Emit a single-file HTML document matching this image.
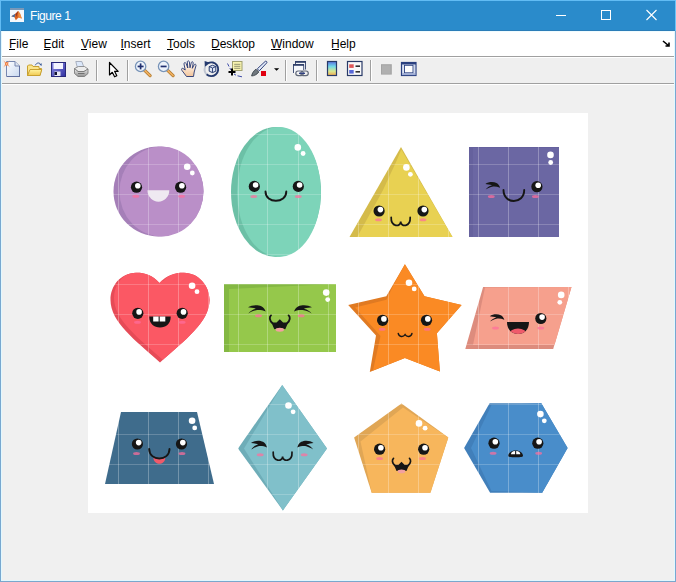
<!DOCTYPE html>
<html><head><meta charset="utf-8">
<style>
html,body{margin:0;padding:0;}
body{width:676px;height:582px;position:relative;overflow:hidden;background:#f0f0f0;font-family:"Liberation Sans",sans-serif;}
.abs{position:absolute;}
#title{left:0;top:0;width:676px;height:31px;background:#2a8bcb;}
#ttext{left:30px;top:9px;color:#fff;font-size:12px;letter-spacing:-0.45px;white-space:nowrap;}
#menu{left:1px;top:31px;width:674px;height:25px;background:#fff;}
.mi{position:absolute;top:37px;font-size:12px;color:#000;white-space:nowrap;}
.ul{position:absolute;top:49px;height:1px;width:6px;background:#000;}
#l1{left:1px;top:56px;width:674px;height:1px;background:#a0a0a0;}
#l1b{left:1px;top:57px;width:674px;height:1px;background:#fff;}
#tb{left:1px;top:58px;width:674px;height:25px;background:#efefef;}
#l2{left:1px;top:83px;width:674px;height:1px;background:#a0a0a0;}
#l2b{left:1px;top:84px;width:674px;height:1px;background:#fff;}
#bl{left:0;top:31px;width:1px;height:551px;background:#78a8d0;}#bl2{left:1px;top:31px;width:1px;height:550px;background:#e2f8ff;}#tbl{left:0;top:0;width:1px;height:31px;background:#62bcf4;}#tbt{left:0;top:0;width:676px;height:1px;background:#62bcf4;}#tbr{left:675px;top:0;width:1px;height:31px;background:#6cc4f8;}
#br{left:675px;top:31px;width:1px;height:551px;background:#78a8d0;}#br2{left:674px;top:31px;width:1px;height:550px;background:#e2f8ff;}
#bb{left:0;top:581px;width:676px;height:1px;background:#7aa8cc;}#bb2{left:1px;top:580px;width:674px;height:1px;background:#e2f8ff;}
#img{left:88px;top:113px;width:500px;height:400px;background:#fff;}
svg{position:absolute;left:0;top:0;}
</style></head><body>
<div id="title" class="abs"></div><div class="abs" style="left:1px;top:30px;width:674px;height:1px;background:#2b7db8"></div>
<div id="ttext" class="abs">Figure 1</div>
<div id="menu" class="abs"></div><div class="abs" style="left:1px;top:31px;width:674px;height:1px;background:#f0fcff"></div>
<div class="mi" style="left:9px">File</div><div class="ul" style="left:9px"></div>
<div class="mi" style="left:43.5px">Edit</div><div class="ul" style="left:44px"></div>
<div class="mi" style="left:81px">View</div><div class="ul" style="left:81px"></div>
<div class="mi" style="left:120.5px">Insert</div><div class="ul" style="left:121px;width:3px"></div>
<div class="mi" style="left:167px">Tools</div><div class="ul" style="left:167px"></div>
<div class="mi" style="left:211px">Desktop</div><div class="ul" style="left:212px;width:8px"></div>
<div class="mi" style="left:271px">Window</div><div class="ul" style="left:271px;width:10px"></div>
<div class="mi" style="left:331px">Help</div><div class="ul" style="left:332px;width:7px"></div>
<div id="l1" class="abs"></div><div id="l1b" class="abs"></div>
<div id="tb" class="abs"></div>
<div id="l2" class="abs"></div><div id="l2b" class="abs"></div>
<div id="bl" class="abs"></div><div id="br" class="abs"></div><div id="bb" class="abs"></div><div id="bl2" class="abs"></div><div id="br2" class="abs"></div><div id="bb2" class="abs"></div><div id="tbl" class="abs"></div><div id="tbt" class="abs"></div><div id="tbr" class="abs"></div>
<div id="img" class="abs"></div>
<svg width="676" height="582" viewBox="0 0 676 582">
<circle cx="158.5" cy="191.5" r="45" fill="#a57fb8"/>
<ellipse cx="161.5" cy="191.5" rx="42" ry="45" fill="#ba8fc8"/>
<ellipse cx="276" cy="192" rx="45" ry="65" fill="#6cc0a6"/>
<ellipse cx="279" cy="192" rx="42" ry="65" fill="#7dd4b9"/>
<polygon points="401,147 349.5,237 452.5,237" fill="#d4bb4a"/>
<polygon points="401.3,149.5 452.5,237 357.2,237 382.8,190.5 396.5,161" fill="#e8d152"/>
<rect x="469" y="147" width="90" height="90" fill="#65619d"/>
<rect x="473" y="147.8" width="86" height="89.2" fill="#6b67a3"/>
<clipPath id="hc"><path d="M159.5,283 C152,275 145,272.7 136,272.8 C120,273.5 110.5,286 110.5,300 C110.5,322 135,340 160,362.5 C185,340 209.5,322 209.5,300 C209.5,286 199,273 184,272.8 C175,272.7 167,275 159.5,283 Z"/></clipPath><path d="M159.5,283 C152,275 145,272.7 136,272.8 C120,273.5 110.5,286 110.5,300 C110.5,322 135,340 160,362.5 C185,340 209.5,322 209.5,300 C209.5,286 199,273 184,272.8 C175,272.7 167,275 159.5,283 Z" fill="#e64b57"/><g clip-path="url(#hc)"><path d="M159.5,283 C152,275 145,272.7 136,272.8 C120,273.5 110.5,286 110.5,300 C110.5,322 135,340 160,362.5 C185,340 209.5,322 209.5,300 C209.5,286 199,273 184,272.8 C175,272.7 167,275 159.5,283 Z" fill="#fb5864" transform="translate(3.5,-2)"/></g>
<rect x="224" y="284" width="112" height="68" fill="#84b843"/>
<polygon points="229,289 336,284 336,352 229,352" fill="#95c84b"/>
<polygon points="404.9,264.2 424.5,296.2 461.6,305 436.9,333.3 439.9,371.4 404.9,358 369.8,372 376,335.4 348.2,305 386.3,296.2" fill="#e07a22"/>
<polygon points="404.9,264.2 424.5,296.2 461.6,305 436.9,333.3 439.9,371.4 404.9,358 373,370.5 380.5,336 355,307.5 386.5,299.8 393.5,285" fill="#fa8a24"/>
<polygon points="483.1,287 571.5,287 553.2,349 465.3,349" fill="#dd8c7d"/>
<polygon points="485,287.5 571.5,287 554.5,345 473,345" fill="#f6a08d"/>
<polygon points="121,412 197,412 214,484 105,484" fill="#3f6c8c"/>
<polygon points="282.2,385 327,448.4 282.9,510.4 238,448.4" fill="#6eadb8"/>
<polygon points="282.2,385 327,448.4 282.9,510.4 244,448.6" fill="#80c0ca"/>
<polygon points="401.5,403.6 448.3,437.4 430.4,492.7 371.7,492.7 354.1,437.4" fill="#e0a655"/>
<polygon points="403,407.5 448.3,437.4 430.4,492.7 371.7,492.7 360.5,441.5" fill="#f7b65c"/>
<polygon points="489.6,403.3 541.3,403.3 567.6,448 542.2,492.7 490.1,492.7 464.1,448" fill="#417fba"/>
<polygon points="491.5,405 541.3,403.3 567.6,448 542.2,492.7 491.5,491 471,448" fill="#498dca"/>
<clipPath id="ic"><rect x="88" y="113" width="500" height="400"/></clipPath>
<g clip-path="url(#ic)"><g stroke="#fff" stroke-width="1"><line x1="118.5" y1="113" x2="118.5" y2="513" opacity="0.27"/><line x1="148.5" y1="113" x2="148.5" y2="513" opacity="0.27"/><line x1="178.5" y1="113" x2="178.5" y2="513" opacity="0.27"/><line x1="208.5" y1="113" x2="208.5" y2="513" opacity="0.27"/><line x1="238.5" y1="113" x2="238.5" y2="513" opacity="0.27"/><line x1="267.5" y1="113" x2="267.5" y2="513" opacity="0.27"/><line x1="298.5" y1="113" x2="298.5" y2="513" opacity="0.27"/><line x1="328.5" y1="113" x2="328.5" y2="513" opacity="0.27"/><line x1="358.5" y1="113" x2="358.5" y2="513" opacity="0.27"/><line x1="388.5" y1="113" x2="388.5" y2="513" opacity="0.27"/><line x1="418.5" y1="113" x2="418.5" y2="513" opacity="0.27"/><line x1="448.5" y1="113" x2="448.5" y2="513" opacity="0.27"/><line x1="478.5" y1="113" x2="478.5" y2="513" opacity="0.27"/><line x1="508.5" y1="113" x2="508.5" y2="513" opacity="0.27"/><line x1="538.5" y1="113" x2="538.5" y2="513" opacity="0.27"/><line x1="568.5" y1="113" x2="568.5" y2="513" opacity="0.27"/><line x1="88" y1="134.5" x2="588" y2="134.5" opacity="0.2"/><line x1="88" y1="164.5" x2="588" y2="164.5" opacity="0.2"/><line x1="88" y1="194.5" x2="588" y2="194.5" opacity="0.2"/><line x1="88" y1="224.5" x2="588" y2="224.5" opacity="0.2"/><line x1="88" y1="254.5" x2="588" y2="254.5" opacity="0.2"/><line x1="88" y1="284.5" x2="588" y2="284.5" opacity="0.2"/><line x1="88" y1="314.5" x2="588" y2="314.5" opacity="0.2"/><line x1="88" y1="344.5" x2="588" y2="344.5" opacity="0.2"/><line x1="88" y1="374.5" x2="588" y2="374.5" opacity="0.2"/><line x1="88" y1="404.5" x2="588" y2="404.5" opacity="0.2"/><line x1="88" y1="434.5" x2="588" y2="434.5" opacity="0.2"/><line x1="88" y1="464.5" x2="588" y2="464.5" opacity="0.2"/><line x1="88" y1="494.5" x2="588" y2="494.5" opacity="0.2"/></g></g>
<circle cx="136.5" cy="187.2" r="5.6" fill="#161616"/><circle cx="137.8" cy="185.79999999999998" r="2.8" fill="#fff"/><circle cx="180.6" cy="187.2" r="5.6" fill="#161616"/><circle cx="181.9" cy="185.79999999999998" r="2.8" fill="#fff"/><ellipse cx="135.8" cy="196.2" rx="3.4" ry="1.5" fill="#ff6e9c" opacity="0.72"/><ellipse cx="181.6" cy="196.2" rx="3.4" ry="1.5" fill="#ff6e9c" opacity="0.72"/><circle cx="187.2" cy="166.7" r="3.3" fill="#fff"/><circle cx="192.3" cy="173" r="2.4" fill="#fff"/>
<path d="M147.5,190.2 L169.3,190.2 A10.9,11.5 0 0 1 147.5,190.2 Z" fill="#efe9f1"/>
<circle cx="254.3" cy="186.4" r="5.6" fill="#161616"/><circle cx="255.60000000000002" cy="185.0" r="2.8" fill="#fff"/><circle cx="298.3" cy="186.4" r="5.6" fill="#161616"/><circle cx="299.6" cy="185.0" r="2.8" fill="#fff"/><ellipse cx="253.8" cy="196.4" rx="3.4" ry="1.5" fill="#ff6e9c" opacity="0.72"/><ellipse cx="298.3" cy="196.4" rx="3.4" ry="1.5" fill="#ff6e9c" opacity="0.72"/><circle cx="297.8" cy="147.4" r="3.3" fill="#fff"/><circle cx="303.1" cy="153.5" r="2.4" fill="#fff"/>
<path d="M265.5,191.5 C265.5,203.86900000000003 286.3,203.86900000000003 286.3,191.5" fill="none" stroke="#161616" stroke-width="1.9" stroke-linecap="round"/>
<circle cx="379.1" cy="211" r="5.6" fill="#161616"/><circle cx="380.40000000000003" cy="209.6" r="2.8" fill="#fff"/><circle cx="423" cy="211" r="5.6" fill="#161616"/><circle cx="424.3" cy="209.6" r="2.8" fill="#fff"/><ellipse cx="378.5" cy="219.7" rx="3.4" ry="1.5" fill="#ff6e9c" opacity="0.72"/><ellipse cx="423" cy="219.7" rx="3.4" ry="1.5" fill="#ff6e9c" opacity="0.72"/><circle cx="406.4" cy="167.4" r="3.3" fill="#fff"/><circle cx="410.4" cy="174.3" r="2.4" fill="#fff"/>
<path d="M391.2,217.3 C390.7,227.31 400.7,227.31 400.7,221.535 C400.7,227.31 410.7,227.31 410.2,217.3" fill="none" stroke="#161616" stroke-width="1.7" stroke-linecap="round"/>
<path d="M485.40,183.95 C488.34,181.73 493.49,181.51 496.43,182.99 C498.34,183.95 499.51,185.80 500.10,187.65 C497.16,186.54 494.22,186.17 492.01,186.69 C489.81,187.28 487.16,188.39 485.69,189.50 C486.87,187.65 489.07,185.95 492.01,185.21 C489.81,184.32 487.16,184.32 485.40,183.95Z" fill="#161616"/><circle cx="536.9" cy="186.7" r="5.6" fill="#161616"/><circle cx="538.1999999999999" cy="185.29999999999998" r="2.8" fill="#fff"/><ellipse cx="491.3" cy="196.5" rx="3.4" ry="1.5" fill="#ff6e9c" opacity="0.72"/><ellipse cx="535.4" cy="196.5" rx="3.4" ry="1.5" fill="#ff6e9c" opacity="0.72"/><circle cx="550.5" cy="154.9" r="3.3" fill="#fff"/><circle cx="550.7" cy="162.5" r="2.4" fill="#fff"/>
<path d="M503.5,190 C503.5,204.63 524.2,204.63 524.2,190" fill="none" stroke="#161616" stroke-width="1.9" stroke-linecap="round"/>
<circle cx="137.8" cy="313.3" r="5.6" fill="#161616"/><circle cx="139.10000000000002" cy="311.90000000000003" r="2.8" fill="#fff"/><circle cx="182.2" cy="313.3" r="5.6" fill="#161616"/><circle cx="183.5" cy="311.90000000000003" r="2.8" fill="#fff"/><ellipse cx="137.5" cy="322.3" rx="3.4" ry="1.5" fill="#ff6e9c" opacity="0.72"/><ellipse cx="182.2" cy="322.3" rx="3.4" ry="1.5" fill="#ff6e9c" opacity="0.72"/><circle cx="192.1" cy="285.7" r="3.3" fill="#fff"/><circle cx="197" cy="291.7" r="2.4" fill="#fff"/>
<path d="M149.3,316.5 L170.7,316.5 C170.7,324 166,327.5 160,327.5 C154,327.5 149.3,324 149.3,316.5 Z" fill="#161616"/>
<rect x="153.2" y="316.5" width="5.4" height="5" fill="#fff"/><rect x="159.7" y="316.5" width="5.6" height="5" fill="#fff"/>
<path d="M248.00,307.27 C251.54,304.78 257.74,304.54 261.27,306.20 C263.58,307.27 264.99,309.35 265.70,311.43 C262.16,310.18 258.62,309.76 255.97,310.35 C253.31,311.01 250.12,312.25 248.35,313.50 C249.77,311.43 252.43,309.52 255.97,308.69 C253.31,307.69 250.12,307.69 248.00,307.27Z" fill="#161616"/><path d="M312.00,307.27 C308.40,304.78 302.10,304.54 298.50,306.20 C296.16,307.27 294.72,309.35 294.00,311.43 C297.60,310.18 301.20,309.76 303.90,310.35 C306.60,311.01 309.84,312.25 311.64,313.50 C310.20,311.43 307.50,309.52 303.90,308.69 C306.60,307.69 309.84,307.69 312.00,307.27Z" fill="#161616"/><ellipse cx="258.5" cy="315.8" rx="3.4" ry="1.5" fill="#ff6e9c" opacity="0.72"/><ellipse cx="301.2" cy="315.8" rx="3.4" ry="1.5" fill="#ff6e9c" opacity="0.72"/><circle cx="326.2" cy="292.6" r="3.3" fill="#fff"/><circle cx="327.7" cy="299.6" r="2.4" fill="#fff"/>
<path d="M271.00,315.42 C269.24,316.96 269.24,320.48 272.54,323.23 M288.60,315.42 C290.36,316.96 290.36,320.48 287.06,323.23" fill="none" stroke="#161616" stroke-width="1.87" stroke-linecap="round"/><path d="M271.44,322.46 L276.50,322.46 L279.80,319.16 L283.10,322.46 L288.16,322.46 L285.30,329.28 L282.00,328.40 L277.60,328.40 L274.30,329.28 Z" fill="#161616"/><ellipse cx="279.8" cy="329.72" rx="4.18" ry="1.98" fill="#f2a0a0"/>
<circle cx="382.6" cy="320.3" r="5.6" fill="#161616"/><circle cx="383.90000000000003" cy="318.90000000000003" r="2.8" fill="#fff"/><circle cx="426.5" cy="320.3" r="5.6" fill="#161616"/><circle cx="427.8" cy="318.90000000000003" r="2.8" fill="#fff"/><ellipse cx="382.2" cy="329.2" rx="3.4" ry="1.5" fill="#ff6e9c" opacity="0.72"/><ellipse cx="427.2" cy="329.2" rx="3.4" ry="1.5" fill="#ff6e9c" opacity="0.72"/><circle cx="409" cy="282.8" r="3.3" fill="#fff"/><circle cx="414.2" cy="288.9" r="2.4" fill="#fff"/>
<path d="M398.3,333.6 C399,337 403.2,337.3 405.1,334.6 C407,337.3 411.2,337 411.9,333.6" fill="none" stroke="#161616" stroke-width="1.5" stroke-linecap="round"/>
<path d="M489.80,316.17 C492.72,314.04 497.83,313.83 500.75,315.25 C502.65,316.17 503.82,317.95 504.40,319.73 C501.48,318.66 498.56,318.31 496.37,318.80 C494.18,319.37 491.55,320.44 490.09,321.50 C491.26,319.73 493.45,318.09 496.37,317.38 C494.18,316.53 491.55,316.53 489.80,316.17Z" fill="#161616"/><circle cx="540.8" cy="318.5" r="5.6" fill="#161616"/><circle cx="542.0999999999999" cy="317.1" r="2.8" fill="#fff"/><ellipse cx="495.5" cy="328" rx="3.4" ry="1.5" fill="#ff6e9c" opacity="0.72"/><ellipse cx="540.8" cy="328" rx="3.4" ry="1.5" fill="#ff6e9c" opacity="0.72"/><circle cx="561.2" cy="294.9" r="3.3" fill="#fff"/><circle cx="559.8" cy="302.3" r="2.4" fill="#fff"/>
<clipPath id="pm"><path d="M507,322 L529,322 C529,330 524,334 518,334 C512,334 507,330 507,322 Z"/></clipPath><path d="M507,322 L529,322 C529,330 524,334 518,334 C512,334 507,330 507,322 Z" fill="#161616"/><g clip-path="url(#pm)"><ellipse cx="518" cy="334.5" rx="9" ry="6" fill="#ef5b6b"/></g>
<circle cx="137.4" cy="444" r="5.6" fill="#161616"/><circle cx="138.70000000000002" cy="442.6" r="2.8" fill="#fff"/><circle cx="181.5" cy="444" r="5.6" fill="#161616"/><circle cx="182.8" cy="442.6" r="2.8" fill="#fff"/><ellipse cx="136.5" cy="453.6" rx="3.4" ry="1.5" fill="#ff6e9c" opacity="0.72"/><ellipse cx="182" cy="453.6" rx="3.4" ry="1.5" fill="#ff6e9c" opacity="0.72"/><circle cx="192.1" cy="420.7" r="3.3" fill="#fff"/><circle cx="194.7" cy="427.9" r="2.4" fill="#fff"/>
<path d="M153.4,457.8 C154,465.8 164.8,465.8 165.3,457.8 Z" fill="#ef5a6a"/>
<path d="M149.2,449 C149.2,461.635 169.5,461.635 169.5,449" fill="none" stroke="#161616" stroke-width="1.9" stroke-linecap="round"/>
<path d="M251.00,443.00 C254.20,440.36 259.80,440.10 263.00,441.86 C265.08,443.00 266.36,445.20 267.00,447.40 C263.80,446.08 260.60,445.64 258.20,446.26 C255.80,446.96 252.92,448.28 251.32,449.60 C252.60,447.40 255.00,445.38 258.20,444.50 C255.80,443.44 252.92,443.44 251.00,443.00Z" fill="#161616"/><path d="M313.50,443.00 C310.26,440.36 304.59,440.10 301.35,441.86 C299.24,443.00 297.95,445.20 297.30,447.40 C300.54,446.08 303.78,445.64 306.21,446.26 C308.64,446.96 311.56,448.28 313.18,449.60 C311.88,447.40 309.45,445.38 306.21,444.50 C308.64,443.44 311.56,443.44 313.50,443.00Z" fill="#161616"/><ellipse cx="260.2" cy="454.7" rx="3.4" ry="1.5" fill="#ff6e9c" opacity="0.72"/><ellipse cx="304.2" cy="454.7" rx="3.4" ry="1.5" fill="#ff6e9c" opacity="0.72"/><circle cx="288.5" cy="405.5" r="3.3" fill="#fff"/><circle cx="293.1" cy="411.8" r="2.4" fill="#fff"/>
<path d="M273.2,452.2 C272.7,462.08000000000004 282.6,462.08000000000004 282.6,456.38 C282.6,462.08000000000004 292.5,462.08000000000004 292,452.2" fill="none" stroke="#161616" stroke-width="1.7" stroke-linecap="round"/>
<circle cx="379.6" cy="449.2" r="5.6" fill="#161616"/><circle cx="380.90000000000003" cy="447.8" r="2.8" fill="#fff"/><circle cx="423.7" cy="449.2" r="5.6" fill="#161616"/><circle cx="425.0" cy="447.8" r="2.8" fill="#fff"/><ellipse cx="379.6" cy="458.5" rx="3.4" ry="1.5" fill="#ff6e9c" opacity="0.72"/><ellipse cx="422.5" cy="458.5" rx="3.4" ry="1.5" fill="#ff6e9c" opacity="0.72"/><circle cx="419" cy="423.4" r="3.3" fill="#fff"/><circle cx="425.1" cy="428.2" r="2.4" fill="#fff"/>
<path d="M393.50,458.40 C391.90,459.80 391.90,463.00 394.90,465.50 M409.50,458.40 C411.10,459.80 411.10,463.00 408.10,465.50" fill="none" stroke="#161616" stroke-width="1.70" stroke-linecap="round"/><path d="M393.90,464.80 L398.50,464.80 L401.50,461.80 L404.50,464.80 L409.10,464.80 L406.50,471.00 L403.50,470.20 L399.50,470.20 L396.50,471.00 Z" fill="#161616"/><ellipse cx="401.5" cy="471.40" rx="3.80" ry="1.80" fill="#f2a0a0"/>
<circle cx="494" cy="443.2" r="5.6" fill="#161616"/><circle cx="495.3" cy="441.8" r="2.8" fill="#fff"/><circle cx="537.8" cy="443.2" r="5.6" fill="#161616"/><circle cx="539.0999999999999" cy="441.8" r="2.8" fill="#fff"/><ellipse cx="493.1" cy="453.2" rx="3.4" ry="1.5" fill="#ff6e9c" opacity="0.72"/><ellipse cx="538.7" cy="453.2" rx="3.4" ry="1.5" fill="#ff6e9c" opacity="0.72"/><circle cx="540.4" cy="414.1" r="3.3" fill="#fff"/><circle cx="544.3" cy="420.8" r="2.4" fill="#fff"/>
<path d="M508.3,456 C508.3,453 511,450.4 515.6,450.4 C520.3,450.4 523,453 523,456 C523,457 521,457.2 515.6,457.2 C510.3,457.2 508.3,457 508.3,456 Z" fill="#161616"/>
<path d="M511,454.2 C511,452.3 512.5,450.9 515.1,450.9 V454.2 Z M516.2,450.9 C518.8,450.9 520.3,452.3 520.3,454.2 H516.2 Z" fill="#fff"/>
<rect x="96" y="60" width="1" height="21" fill="#a0a0a0"/><rect x="97" y="60" width="1" height="21" fill="#fff"/>
<rect x="127" y="60" width="1" height="21" fill="#a0a0a0"/><rect x="128" y="60" width="1" height="21" fill="#fff"/>
<rect x="285" y="60" width="1" height="21" fill="#a0a0a0"/><rect x="286" y="60" width="1" height="21" fill="#fff"/>
<rect x="316" y="60" width="1" height="21" fill="#a0a0a0"/><rect x="317" y="60" width="1" height="21" fill="#fff"/>
<rect x="370" y="60" width="1" height="21" fill="#a0a0a0"/><rect x="371" y="60" width="1" height="21" fill="#fff"/>
<defs><linearGradient id="gpage" x1="0" y1="0" x2="1" y2="1"><stop offset="0" stop-color="#ffffff"/><stop offset="1" stop-color="#c8d8f0"/></linearGradient><linearGradient id="gfold" x1="0" y1="0" x2="0" y2="1"><stop offset="0" stop-color="#fff4a0"/><stop offset="1" stop-color="#f0c850"/></linearGradient><linearGradient id="gcb" x1="0" y1="0" x2="0" y2="1"><stop offset="0" stop-color="#5a70e0"/><stop offset="0.35" stop-color="#70d8e8"/><stop offset="0.7" stop-color="#d8e890"/><stop offset="1" stop-color="#f0a850"/></linearGradient><linearGradient id="gflop" x1="0" y1="0" x2="1" y2="1"><stop offset="0" stop-color="#9090e8"/><stop offset="1" stop-color="#3030a0"/></linearGradient><linearGradient id="gprn" x1="0" y1="0" x2="0" y2="1"><stop offset="0" stop-color="#f0f0f0"/><stop offset="1" stop-color="#909090"/></linearGradient></defs>
<path d="M6.5,61.5 H15 L19.5,66 V76.5 H6.5 Z" fill="url(#gpage)" stroke="#7888b0" stroke-width="1"/><path d="M15,61.5 V66 H19.5" fill="#dde4f0" stroke="#7888b0" stroke-width="1"/><rect x="7" y="76" width="13" height="1" fill="#6070a0"/><rect x="19" y="66" width="1" height="11" fill="#6070a0"/><path d="M3.8,61.2 L9.4,66.6 M9.4,61.2 L3.8,66.6" stroke="#f09060" stroke-width="0.8"/><circle cx="6.6" cy="63.9" r="1.8" fill="#f07838"/><circle cx="6.6" cy="63.9" r="0.9" fill="#ffc090"/>
<path d="M27.5,66 V75.5 H40 L41.5,68.5 H39 V66.5 H33 L32,65 H28.5 Z" fill="#fbe48a" stroke="#c8a030" stroke-width="1"/><path d="M27.5,75.5 L30,69.5 H41.8 L40,75.5 Z" fill="url(#gfold)" stroke="#c8a030" stroke-width="1"/><path d="M35.3,65.3 C36.5,62.6 39.2,62.3 40.6,64.3" fill="none" stroke="#3a5a98" stroke-width="1"/><path d="M39.3,64.5 L41.7,63.2 L41.6,66.1 Z" fill="#3a5a98"/>
<rect x="51.5" y="62.5" width="14" height="14" fill="url(#gflop)" stroke="#28287a" stroke-width="1"/><rect x="53.5" y="63" width="9.5" height="6" fill="#f4f4ff"/><rect x="54.5" y="71.5" width="6" height="4.5" fill="#e8e8f4"/><rect x="54.5" y="72" width="2.5" height="3" fill="#101030"/>
<path d="M75.8,61.5 H81.8 L83.8,67 H77.2 Z" fill="#dce8fa" stroke="#98a0b0" stroke-width="0.8"/><path d="M74.5,68.5 L78.5,66.5 H84.5 L88,69 L84,71.5 H78 Z" fill="#ececec" stroke="#808080" stroke-width="0.8"/><path d="M74.5,68.5 L78,71.5 H84 L88,69 V73.5 L84.5,76.5 H78 L74.5,73.5 Z" fill="url(#gprn)" stroke="#707070" stroke-width="0.8"/><path d="M78,73.5 H84.5" stroke="#606060" stroke-width="0.8"/>
<path d="M109.5,62.5 V75 L112.3,72.3 L114.6,76.8 L116.8,75.8 L114.6,71.3 H118.2 Z" fill="#fff" stroke="#000" stroke-width="1.2" stroke-linejoin="round"/>
<path d="M144.4,70.2 L150.1,75.6" stroke="#b07a30" stroke-width="3.2" stroke-linecap="round"/><path d="M144.4,70.2 L150.1,75.6" stroke="#f0b060" stroke-width="1.6" stroke-linecap="round"/><circle cx="140.6" cy="66.4" r="5.2" fill="#eef4fc" stroke="#7894b8" stroke-width="1.3"/>
<rect x="137.6" y="65.6" width="6" height="1.7" fill="#203070"/>
<rect x="139.75" y="63.4" width="1.7" height="6" fill="#203070"/>
<path d="M167.4,70.2 L173.1,75.6" stroke="#b07a30" stroke-width="3.2" stroke-linecap="round"/><path d="M167.4,70.2 L173.1,75.6" stroke="#f0b060" stroke-width="1.6" stroke-linecap="round"/><circle cx="163.6" cy="66.4" r="5.2" fill="#eef4fc" stroke="#7894b8" stroke-width="1.3"/>
<rect x="160.6" y="65.6" width="6" height="1.7" fill="#203070"/>
<defs><linearGradient id="ghand" x1="0" y1="0" x2="0" y2="1"><stop offset="0" stop-color="#ffffff"/><stop offset="0.45" stop-color="#fbe6d2"/><stop offset="1" stop-color="#f2c49a"/></linearGradient><linearGradient id="grot" x1="0" y1="0" x2="1" y2="1"><stop offset="0" stop-color="#ffffff"/><stop offset="0.5" stop-color="#253a6e"/></linearGradient></defs>
<path d="M186.5,76.5 L182,70.5 C181,69.3 181.8,67.8 183,68.5 L185.2,70 L184,64 C183.7,62.6 185.5,62 186,63.3 L187.8,68 L187.3,62 C187.2,60.6 189.2,60.5 189.4,62 L190,67.8 L191.3,62.6 C191.6,61.3 193.4,61.6 193.2,63 L192.3,68.3 L194.2,64.8 C194.8,63.7 196.4,64.3 196,65.5 L194.2,72 L193.5,76.5 Z" fill="url(#ghand)" stroke="#253570" stroke-width="0.9" stroke-linejoin="round"/>
<path d="M208,63.2 A6.9,6.9 0 1 1 206.5,74.2" fill="none" stroke="#253a6e" stroke-width="1.9"/><path d="M206.5,74.2 A6.9,6.9 0 0 1 205.2,66.8" fill="none" stroke="#c0c6d2" stroke-width="1.9"/><path d="M204.6,61 L210,62.8 L204.8,67 Z" fill="#253a6e"/><path d="M209.2,66.6 L212.5,65.3 L215.8,66.6 V71.2 L212.5,72.6 L209.2,71.2 Z" fill="#dfe6f6" stroke="#253a6e" stroke-width="1"/><path d="M209.2,66.6 L212.5,68 L215.8,66.6 M212.5,68 V72.6" fill="none" stroke="#253a6e" stroke-width="0.9"/>
<rect x="232.5" y="61.5" width="9.5" height="9" fill="#f8f4b0" stroke="#a0a070" stroke-width="1"/><path d="M234.2,64.3 H240.3 M234.2,66.3 H240.3 M234.2,68.3 H240.3" stroke="#8a8a6a" stroke-width="0.9"/><path d="M227.5,63.5 L229,66.5 M229.8,68 L231,70 M234,74 L236,75.2 M237.5,75.8 L242,76.8" stroke="#2a3aa0" stroke-width="0.9" fill="none"/><path d="M228.5,72 H235.5 M232,68.5 V75.5" stroke="#000" stroke-width="2"/>
<path d="M257.3,68.8 L265.3,61.3 C266.3,60.8 267.3,61.8 266.8,62.8 L259.3,70.8 Z" fill="#e4ecfa" stroke="#30407a" stroke-width="1"/><path d="M256,69.2 L258.8,72 C257,74.6 254.2,75.8 251.6,76 C252,73.4 253.6,70.8 256,69.2 Z" fill="#70787e" stroke="#303840" stroke-width="0.8"/><rect x="261" y="71" width="5" height="5" fill="#e00010"/><path d="M274,68.2 H279.2 L276.6,70.8 Z" fill="#000"/>
<path d="M295.5,69.5 V61.5 H305.5 V69.5" fill="#f4f6fa" stroke="#30406a" stroke-width="0.9"/><rect x="295" y="61" width="11" height="1.8" fill="#30406a"/><rect x="293.5" y="64.5" width="10.2" height="8.5" fill="#f6f8fc"/><path d="M293.5,73 V64.5 H303.7 V70" fill="none" stroke="#30406a" stroke-width="0.9"/><rect x="293" y="64" width="11" height="1.8" fill="#30406a"/>
<rect x="327.5" y="61.5" width="9" height="14" fill="url(#gcb)" stroke="#283a68" stroke-width="1.2"/>
<rect x="347.5" y="61.5" width="14.5" height="14" fill="#fafafa" stroke="#283a68" stroke-width="1.2"/><rect x="349.2" y="64.3" width="4.5" height="3.6" fill="#e05858"/><rect x="349.2" y="70" width="4.5" height="3.6" fill="#5868d8"/><rect x="355.5" y="65.5" width="4.5" height="1.3" fill="#000"/><rect x="355.5" y="71.2" width="4.5" height="1.3" fill="#000"/>
<rect x="381" y="64.2" width="10.8" height="10.4" fill="#a4a4a4"/><rect x="382" y="65.3" width="8.5" height="8.5" fill="#b0b0b0"/>
<rect x="401.5" y="62.5" width="14.5" height="13" fill="#e8eefa" stroke="#2a4080" stroke-width="1.2"/><rect x="401.5" y="62.5" width="14.5" height="2" fill="#2a4080"/><rect x="404.5" y="65.3" width="8.5" height="7.5" fill="#fff" stroke="#2a4080" stroke-width="0.9"/><path d="M402.8,65.5 V72.5 M414.7,65.5 V72.5" stroke="#a8b4d8" stroke-width="1" stroke-dasharray="1,1"/><rect x="402" y="73.3" width="13.5" height="1.8" fill="#8898c8"/><path d="M402.5,74.2 H415" stroke="#dfe6f6" stroke-width="0.8" stroke-dasharray="1,1"/>
<rect x="295" y="70.3" width="14" height="6" fill="#efefef" opacity="0"/><rect x="295.8" y="71" width="7.5" height="4.6" rx="2.3" fill="none" stroke="#606878" stroke-width="1.2"/><rect x="300.8" y="71" width="7.5" height="4.6" rx="2.3" fill="none" stroke="#606878" stroke-width="1.2"/><path d="M299,73.3 H305" stroke="#2a3a80" stroke-width="1.3"/>
<rect x="10" y="8" width="14" height="14" fill="#f4f8fc"/><rect x="10" y="8" width="14" height="2" fill="#7898b8"/><path d="M11.3,16.3 L15.5,13.8 L18.2,11 L20,13.5 L21.8,18.6 L18.5,17.5 L15.8,20.3 L14.5,17.2 Z" fill="#d86020"/><path d="M11.3,16.3 L15.5,13.8 L14.5,17.2 Z" fill="#4070a8"/><path d="M18.2,11 L20,13.5 L21.8,18.6 L18.5,17.5 Z" fill="#f09040"/><path d="M15.5,13.8 L18.2,11 L16.5,17 Z" fill="#a03818"/>
<rect x="556" y="15" width="10" height="1" fill="#fff"/><rect x="601.5" y="10.5" width="9" height="9" fill="none" stroke="#fff" stroke-width="1"/><path d="M646.5,10 L656.5,20 M656.5,10 L646.5,20" stroke="#fff" stroke-width="1.1"/>
<path d="M663,41 L669,46 M669,42.5 V46 H665.5" fill="none" stroke="#000" stroke-width="1.6"/>
</svg>
</body></html>
